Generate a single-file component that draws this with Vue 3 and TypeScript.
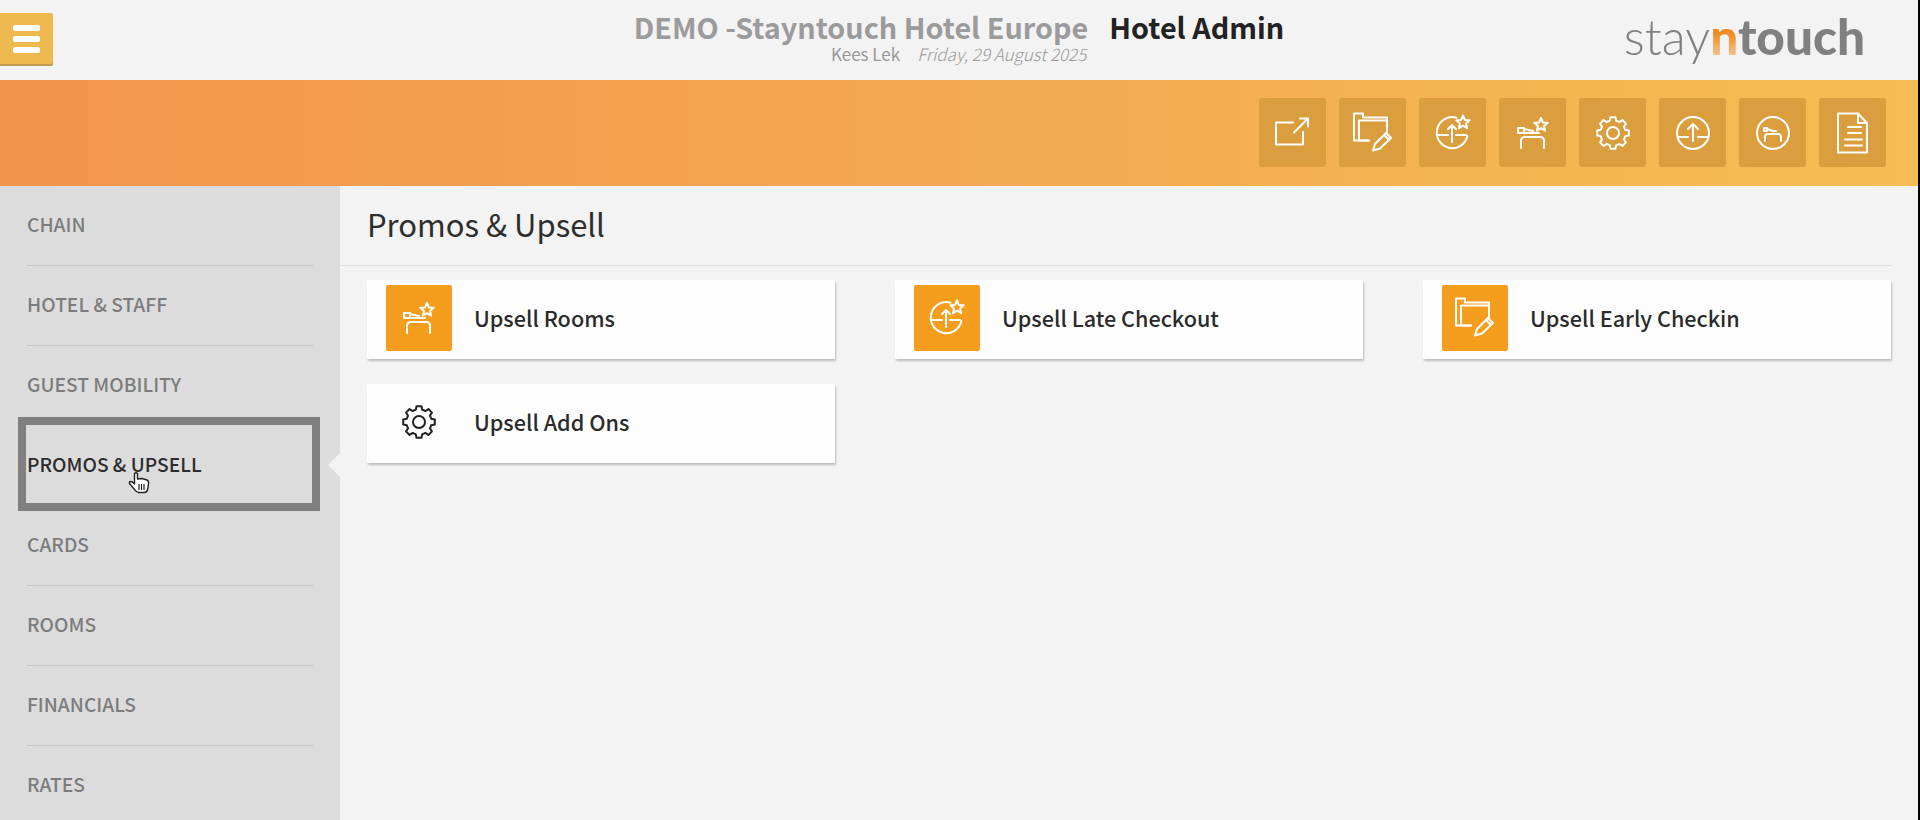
<script setup lang="ts">
const circle = (cx: number, cy: number, r: number) =>
  `M${cx - r} ${cy}a${r} ${r} 0 1 0 ${r * 2} 0a${r} ${r} 0 1 0 ${-r * 2} 0Z`

// five pointed star, used on the upsell icons
const star = (cx: number, cy: number, R: number, r: number) => {
  const pts: string[] = []
  for (let i = 0; i < 10; i++) {
    const a = ((-90 + i * 36) * Math.PI) / 180
    const len = i % 2 ? r : R
    pts.push(`${(cx + len * Math.cos(a)).toFixed(2)} ${(cy + len * Math.sin(a)).toFixed(2)}`)
  }
  return `M${pts.join('L')}Z`
}

const gear = () => {
  const at = (deg: number, r: number) => {
    const a = (deg * Math.PI) / 180
    return `${(24 + r * Math.cos(a)).toFixed(2)} ${(24 + r * Math.sin(a)).toFixed(2)}`
  }
  let d = ''
  for (let i = 0; i < 8; i++) {
    const a = i * 45 - 90
    d += `${i ? 'L' : 'M'}${at(a - 15, 12.6)}L${at(a - 9, 16)}L${at(a + 9, 16)}L${at(a + 15, 12.6)}`
    d += `A12.6 12.6 0 0 1 ${at(a + 30, 12.6)}`
  }
  return d + 'Z'
}

const icons: Record<string, string[]> = {
  external: ['M34 23V35.5H7V13.5H24', 'M25 23.5L39 9.5', 'M31 9.5H39V17.5'],
  folder: [
    'M20 31.5H5V4.5H14V8.5H38V23',
    'M20 31.5H10V11.5H38',
    'M24 41.5L26 35L37 24L42 29L31 39.5Z',
    'M35 26L40 31',
  ],
  lateStar: [
    'M27.5 8.7A15.5 15.5 0 1 0 38.4 27',
    'M23 33V16M19 20L23 16L27 20',
    'M8 26H19M27 26H37',
    star(34, 13.5, 7, 3.2),
  ],
  bedStar: [
    'M12 39V32Q12 28 16 28H31Q35 28 35 32V39',
    'M9 19H15V24H9Z',
    'M15 24H30M15 20L24 22',
    star(32, 16, 7, 3.2),
  ],
  gear: [gear(), circle(24, 24, 6)],
  upCircle: [circle(24, 24, 16), 'M24 32V15M19 20L24 15L29 20', 'M9 28H19M29 28H39'],
  bedCircle: [circle(24, 24, 16), 'M16 32V28Q16 25 19 25H29Q32 25 32 28V32', 'M15 19H18V22H15ZM18 20L24 22H27'],
  doc: ['M9 4.5H29L38 14V43.5H9Z', 'M29 4.5V14H38', 'M19 18H32M19 24H32M16 30.5H33M16 36.5H33'],
}

const toolbar = ['external', 'folder', 'lateStar', 'bedStar', 'gear', 'upCircle', 'bedCircle', 'doc']

const navItems = [
  'CHAIN',
  'HOTEL & STAFF',
  'GUEST MOBILITY',
  'PROMOS & UPSELL',
  'CARDS',
  'ROOMS',
  'FINANCIALS',
  'RATES',
]
const activeIndex = 3

const cards = [
  { label: 'Upsell Rooms', icon: 'bedStar', tile: true },
  { label: 'Upsell Late Checkout', icon: 'lateStar', tile: true },
  { label: 'Upsell Early Checkin', icon: 'folder', tile: true },
  { label: 'Upsell Add Ons', icon: 'gear', tile: false },
]
</script>

<template>
  <div class="page">
    <header class="top">
      <div class="top-left">
        <button class="menu-btn" type="button" aria-label="Menu">
          <span></span><span></span><span></span>
        </button>
      </div>
      <div class="title">
        <div class="hotel">
          <div class="hotel-name">DEMO -Stayntouch Hotel Europe</div>
          <div class="meta"><span class="user">Kees Lek</span><em class="date">Friday, 29 August 2025</em></div>
        </div>
        <div class="section">Hotel Admin</div>
      </div>
      <div class="logo"><span class="logo-stay">stay</span><span class="logo-n">n</span><span class="logo-touch">touch</span></div>
    </header>

    <div class="band">
      <a v-for="name in toolbar" :key="name" class="tool">
        <svg class="icon" viewBox="0 0 48 48" width="48" height="48">
          <path v-for="d in icons[name]" :key="d" :d="d" />
        </svg>
      </a>
    </div>

    <div class="body">
      <nav class="side">
        <a
          v-for="(item, i) in navItems"
          :key="item"
          class="nav-item"
          :class="{ active: i === activeIndex, plain: i === activeIndex - 1 }"
        >
          {{ item }}
          <svg v-if="i === activeIndex" class="pointer" viewBox="0 0 22 22" width="22" height="22">
            <path
              d="M6.5 1.5Q8 0 9.5 1.5V7L14 6.5L19 8Q21 9 20.5 12L19.5 18Q19 20.5 16 20.5H10.5Q8.5 20.5 7 18L1.5 11.5Q1 9.5 3 9.5Q5 10 6.5 12Z"
            />
            <path class="pointer-lines" d="M11 12V18M13.5 12V18M16 12V18" />
          </svg>
        </a>
      </nav>

      <main class="content">
        <h1 class="heading">Promos &amp; Upsell</h1>
        <div class="cards">
          <a v-for="card in cards" :key="card.label" class="card">
            <span class="tile" :class="{ bare: !card.tile }">
              <svg class="icon" viewBox="0 0 48 48" width="48" height="48">
                <path v-for="d in icons[card.icon]" :key="d" :d="d" />
              </svg>
            </span>
            <span class="card-label">{{ card.label }}</span>
          </a>
        </div>
      </main>
    </div>
  </div>
</template>

<style>
html,
body {
  margin: 0;
  overflow: hidden;
  background: #000;
}
</style>

<style scoped>
.page {
  width: 1918px;
  height: 820px;
  overflow: hidden;
  display: flex;
  flex-direction: column;
  background: #f3f3f3;
  font-family: "Noto Sans CJK SC", "Noto Sans", sans-serif;
}

/* header */
.top {
  height: 80px;
  flex: none;
  display: grid;
  grid-template-columns: 1fr auto 1fr;
  background: #f3f3f3;
}
.top-left {
  padding-top: 13px;
}
.menu-btn {
  width: 53px;
  height: 53px;
  padding: 0 0 2px;
  border: 0;
  border-radius: 0 2px 2px 0;
  background: #eeb94f;
  box-shadow: inset 0 -2px 0 #c29c4e;
  display: flex;
  flex-direction: column;
  align-items: center;
  justify-content: center;
  gap: 5px;
}
.menu-btn span {
  width: 27px;
  height: 6px;
  border-radius: 2px;
  background: #fff;
}
.title {
  display: flex;
  gap: 21px;
  padding-top: 11px;
  align-items: flex-start;
}
.hotel {
  text-align: right;
}
.hotel-name,
.section {
  font-size: 28.8px;
  line-height: 32px;
  font-weight: 700;
}
.hotel-name {
  color: #9b9b9b;
}
.section {
  color: #222;
}
.meta {
  margin-top: 1px;
  padding-right: 2px;
  font-size: 17px;
  line-height: 20px;
  color: #999;
}
.date {
  margin-left: 17px;
  font-weight: 300;
}
.logo {
  justify-self: end;
  margin-right: 53px;
  padding-top: 6px;
  font-family: Lato, sans-serif;
  font-size: 49.5px;
  line-height: 60px;
  color: #808080;
}
.logo-stay {
  font-weight: 300;
}
.logo-n {
  font-weight: 900;
  background: linear-gradient(#f08a24 45%, #f9dcb8 100%);
  -webkit-background-clip: text;
  background-clip: text;
  color: transparent;
}
.logo-touch {
  font-weight: 900;
}

/* orange band */
.band {
  height: 106px;
  flex: none;
  box-sizing: border-box;
  padding: 18px 32px 0 0;
  display: flex;
  justify-content: flex-end;
  gap: 13px;
  background: linear-gradient(90deg, #f2954c, #f5bd53);
}
.tool {
  width: 67px;
  height: 69px;
  border-radius: 3px;
  background: #db9e3e;
  color: #fff;
  display: flex;
  align-items: center;
  justify-content: center;
}
.icon {
  display: block;
  fill: none;
  stroke: currentColor;
  stroke-width: 2;
  stroke-linecap: round;
  stroke-linejoin: round;
}

.body {
  flex: 1;
  min-height: 0;
  display: flex;
}

/* sidebar */
.side {
  width: 340px;
  flex: none;
  box-sizing: border-box;
  padding: 0 27px;
  background: #dcdcdc;
}
.nav-item {
  position: relative;
  display: flex;
  align-items: center;
  box-sizing: border-box;
  height: 80px;
  padding-bottom: 4px;
  border-bottom: 1px solid #c6c6c6;
  font-size: 19.2px;
  font-weight: 500;
  color: #7c7c7c;
}
.nav-item.plain,
.nav-item.active {
  border-bottom-color: transparent;
}
.nav-item.active {
  color: #2c2c2c;
}
/* focus ring from the recording */
.nav-item.active::before {
  content: "";
  position: absolute;
  left: -9px;
  right: -7px;
  top: -9px;
  bottom: -6px;
  border: 8px solid #808080;
}
/* caret pointing at the open section */
.nav-item.active::after {
  content: "";
  position: absolute;
  right: -27px;
  top: 27px;
  border-style: solid;
  border-width: 12px 12px 12px 0;
  border-color: transparent #f3f3f3 transparent transparent;
}
.pointer {
  position: absolute;
  left: 101px;
  top: 46px;
  fill: #fff;
  stroke: #222;
  stroke-width: 1.4;
  stroke-linejoin: round;
}
.pointer-lines {
  fill: none;
  stroke-width: 1.2;
}

/* content */
.content {
  flex: 1;
  min-width: 0;
}
.heading {
  margin: 0;
  width: 1552px;
  box-sizing: border-box;
  padding-left: 27px;
  height: 80px;
  border-bottom: 1px solid #e2e2e2;
  font-size: 31px;
  line-height: 76px;
  font-weight: 400;
  color: #2e2e2e;
}
.cards {
  margin: 14px 0 0 27px;
  display: grid;
  grid-template-columns: repeat(3, 468px);
  column-gap: 60px;
  row-gap: 25px;
}
.card {
  height: 79px;
  box-sizing: border-box;
  padding: 5px 19px;
  display: flex;
  align-items: flex-start;
  gap: 22px;
  background: #fdfdfd;
  box-shadow: 1px 2px 2px rgba(0, 0, 0, 0.22);
}
.tile {
  width: 66px;
  height: 66px;
  flex: none;
  border-radius: 2px;
  background: #f59d1d;
  color: #fff;
  display: flex;
  align-items: center;
  justify-content: center;
}
.tile.bare {
  background: transparent;
  color: #222;
}
.card-label {
  font-size: 21.6px;
  line-height: 66px;
  font-weight: 500;
  color: #2b2b2b;
}
</style>
